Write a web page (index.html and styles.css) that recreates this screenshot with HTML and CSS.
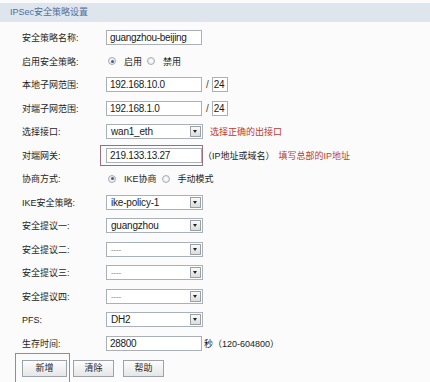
FILE: index.html
```html
<!DOCTYPE html>
<html lang="zh-CN">
<head>
<meta charset="utf-8">
<title>IPSec安全策略设置</title>
<link rel="stylesheet" href="styles.css">
</head>
<body>
<div class="page">
  <div class="title">IPSec安全策略设置</div>
  <div class="form">
    <div class="row"><span class="label">安全策略名称:</span><span class="field">guangzhou-beijing</span></div>
    <div class="row"><span class="label">启用安全策略:</span>
      <span class="radio on"></span><span class="rtext">启用</span>
      <span class="radio"></span><span class="rtext">禁用</span></div>
    <div class="row"><span class="label">本地子网范围:</span><span class="field">192.168.10.0</span><span class="slash">/</span><span class="field mask">24</span></div>
    <div class="row"><span class="label">对端子网范围:</span><span class="field">192.168.1.0</span><span class="slash">/</span><span class="field mask">24</span></div>
    <div class="row"><span class="label">选择接口:</span><span class="select">wan1_eth<span class="arrow"></span></span><span class="note">选择正确的出接口</span></div>
    <div class="row"><span class="label">对端网关:</span><span class="framed"><span class="field">219.133.13.27</span></span><span class="hint">（IP地址或域名）</span><span class="note far">填写总部的IP地址</span></div>
    <div class="row"><span class="label">协商方式:</span>
      <span class="radio on"></span><span class="rtext">IKE协商</span>
      <span class="radio"></span><span class="rtext">手动模式</span></div>
    <div class="row"><span class="label">IKE安全策略:</span><span class="select">ike-policy-1<span class="arrow"></span></span></div>
    <div class="row"><span class="label">安全提议一:</span><span class="select">guangzhou<span class="arrow"></span></span></div>
    <div class="row"><span class="label">安全提议二:</span><span class="select dash">----<span class="arrow"></span></span></div>
    <div class="row"><span class="label">安全提议三:</span><span class="select dash">----<span class="arrow"></span></span></div>
    <div class="row"><span class="label">安全提议四:</span><span class="select dash">----<span class="arrow"></span></span></div>
    <div class="row"><span class="label">PFS:</span><span class="select">DH2<span class="arrow"></span></span></div>
    <div class="row"><span class="label">生存时间:</span><span class="field">28800</span><span class="hint sec">秒（120-604800）</span></div>
  </div>
  <div class="buttons">
    <span class="btnframe"><span class="btn">新增</span></span>
    <span class="btn">清除</span>
    <span class="btn">帮助</span>
  </div>
</div>
</body>
</html>
```
FILE: styles.css
```css
html, body {
  margin: 0;
  padding: 0;
  background: #fbfbfb;
}
body {
  font-family: "Liberation Sans", "Noto Sans CJK SC", sans-serif;
  color: #333;
  width: 430px;
  height: 382px;
  overflow: hidden;
}
.page {
  padding-top: 3px;
}
.title {
  height: 19px;
  line-height: 19px;
  background: #dee5ed;
  color: #4f6f9c;
  font-size: 9px;
  padding-left: 10px;
}
.form {
  padding: 4px 0 0 22px;
}
.row {
  height: 23.5px;
  display: flex;
  align-items: center;
  font-size: 9px;
}
.label {
  width: 84px;
  flex: none;
  color: #1e1e1e;
}
.field {
  box-sizing: border-box;
  width: 96px;
  height: 15px;
  border: 1px solid #aab0b8;
  background: #fff;
  font-size: 10px;
  letter-spacing: -0.3px;
  line-height: 13px;
  padding-left: 3px;
  color: #1a1a1a;
}
.field.mask {
  width: 16px;
  padding-left: 1px;
}
.slash {
  font-size: 10px;
  margin: 0 3px 0 4px;
  color: #444;
}
.select {
  position: relative;
  box-sizing: border-box;
  width: 97px;
  height: 15px;
  border: 1px solid #aab0b8;
  background: #fff;
  font-size: 10px;
  letter-spacing: -0.2px;
  line-height: 13px;
  padding-left: 4px;
  color: #1a1a1a;
}
.select.dash {
  color: #777;
  font-size: 8px;
}
.arrow {
  position: absolute;
  right: 1px;
  top: 1px;
  width: 9px;
  height: 9px;
  border: 1px solid #9aa0a8;
  background: linear-gradient(#fafafa, #dcdcdc);
}
.arrow::after {
  content: "";
  position: absolute;
  left: 2px;
  top: 3px;
  border-left: 2.5px solid transparent;
  border-right: 2.5px solid transparent;
  border-top: 3px solid #222;
}
.note {
  color: #c0392b;
  margin-left: 7px;
}
.note.far {
  margin-left: 4px;
}
.hint {
  margin-left: 1px;
  color: #222;
}
.hint.sec {
  margin-left: 2px;
}
.framed {
  position: relative;
  display: flex;
}
.framed::before {
  content: "";
  position: absolute;
  left: -6px;
  right: -1px;
  top: -3px;
  bottom: -3px;
  border: 1px solid #9c6e7c;
}
.radio {
  box-sizing: border-box;
  width: 8px;
  height: 8px;
  border-radius: 50%;
  border: 1px solid #a8acb2;
  background: radial-gradient(circle, #fff, #dfe2e6);
  margin-left: 2px;
  margin-right: 8px;
  position: relative;
}
.radio.on::after {
  content: "";
  position: absolute;
  left: 1.5px;
  top: 1.5px;
  width: 3px;
  height: 3px;
  border-radius: 50%;
  background: #3d5f8e;
}
.rtext {
  margin-right: 5px;
  color: #1e1e1e;
}
.rtext + .radio {
  margin-left: 0;
}
.buttons {
  display: flex;
  align-items: center;
  padding-left: 22px;
  margin-top: 5px;
  font-size: 9px;
}
.btn {
  box-sizing: border-box;
  width: 41px;
  height: 17px;
  line-height: 15px;
  text-align: center;
  border: 1px solid #9da3aa;
  background: linear-gradient(#fdfdfd, #e6e6e6);
  color: #1e1e1e;
  margin-right: 9px;
}
.btnframe {
  position: relative;
  display: flex;
  margin-right: 6px;
}
.btnframe .btn {
  width: 45px;
  margin-right: 0;
}
.btnframe::before {
  content: "";
  position: absolute;
  left: -7px;
  right: -3px;
  top: -7px;
  bottom: -9px;
  border: 1px solid #b07f8e;
}
```
